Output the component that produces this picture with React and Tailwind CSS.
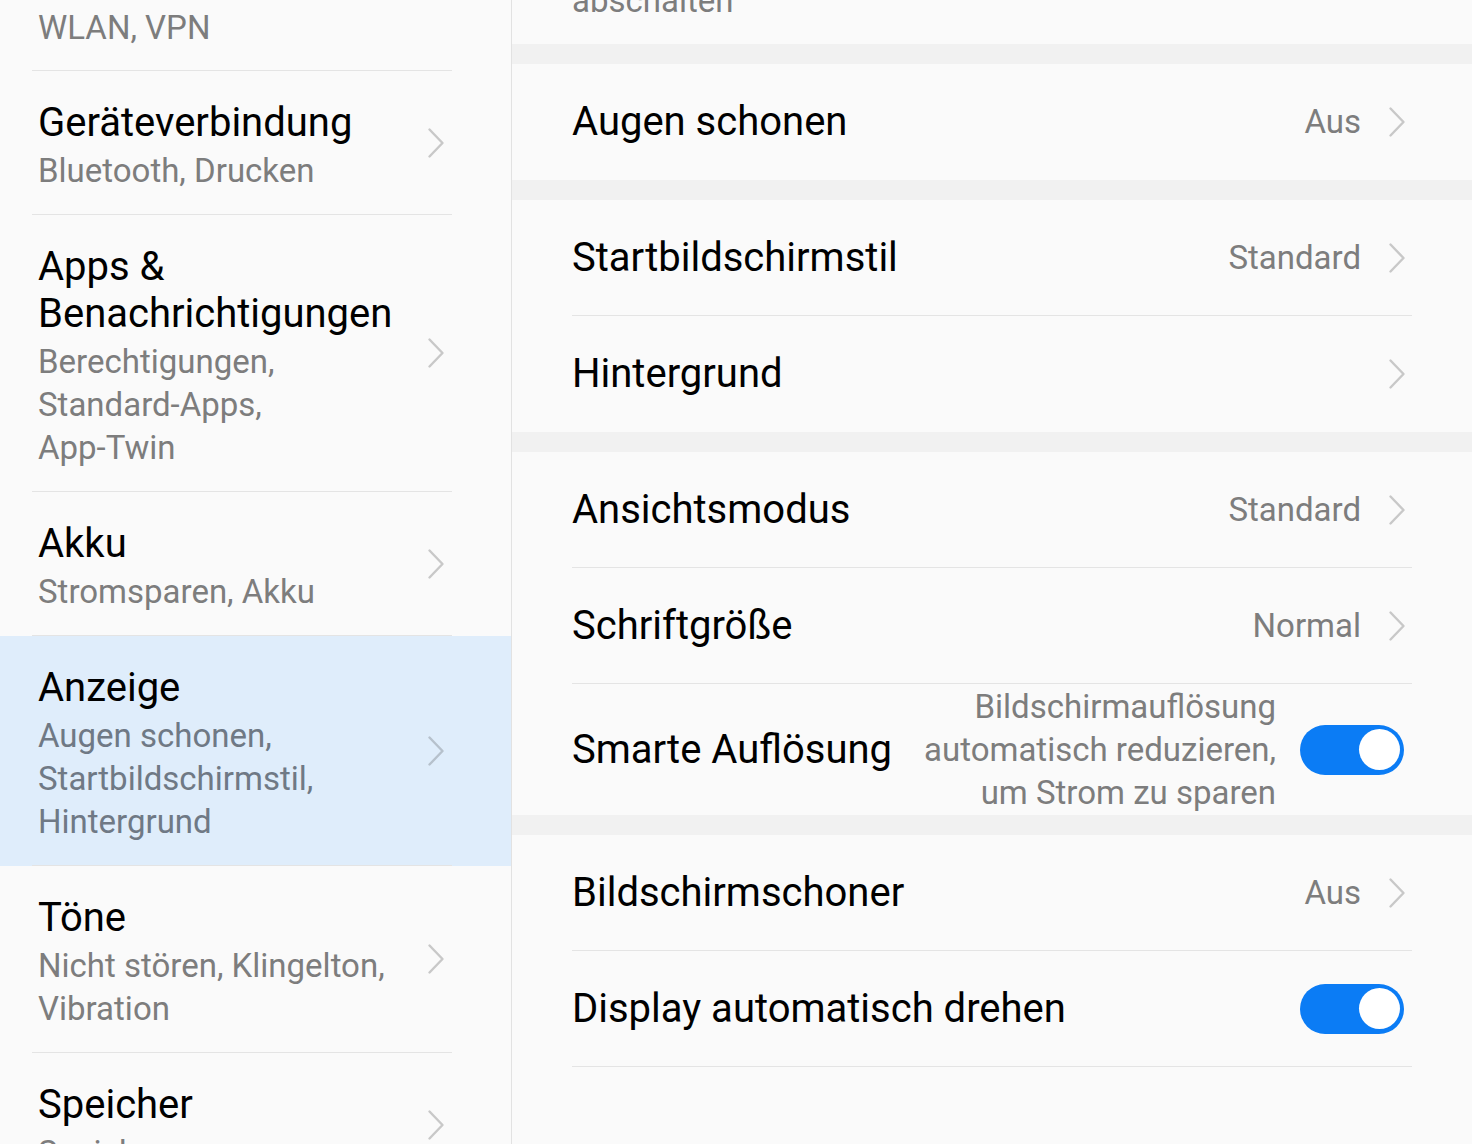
import React from "react";

const font = { fontFamily: "Roboto, 'Noto Sans', sans-serif" };

const Chevron = ({ className = "stroke-[#c8c8c8]" }) => (
    <svg width="18" height="32" viewBox="0 0 18 32" className={className} fill="none">
        <polyline points="2.5,2.5 15.5,16 2.5,29.5" strokeWidth="2.4" strokeLinecap="round" strokeLinejoin="round" />
    </svg>
);

const Toggle = () => (
    <div className="w-[104px] h-[50px] rounded-full bg-[#0b7cf5] flex items-center justify-end pr-[4px]">
        <div className="w-[41px] h-[41px] rounded-full bg-white" />
    </div>
);

const menu = [
    { title: ["Geräteverbindung"], sub: ["Bluetooth, Drucken"] },
    { title: ["Apps &", "Benachrichtigungen"], sub: ["Berechtigungen,", "Standard-Apps,", "App-Twin"] },
    { title: ["Akku"], sub: ["Stromsparen, Akku"] },
    { title: ["Anzeige"], sub: ["Augen schonen,", "Startbildschirmstil,", "Hintergrund"], active: true },
    { title: ["Töne"], sub: ["Nicht stören, Klingelton,", "Vibration"] },
    { title: ["Speicher"], sub: ["Speicher"] },
];

const sections = [
    [{ title: "Augen schonen", value: "Aus" }],
    [{ title: "Startbildschirmstil", value: "Standard" }, { title: "Hintergrund" }],
    [
        { title: "Ansichtsmodus", value: "Standard" },
        { title: "Schriftgröße", value: "Normal" },
        { title: "Smarte Auflösung", smart: true },
    ],
    [{ title: "Bildschirmschoner", value: "Aus" }, { title: "Display automatisch drehen", toggle: true, last: true }],
];

const MenuItem = ({ item }) => (
    <div className={item.active ? "bg-[#dfedfb]" : ""}>
        <div className="ml-[32px] mr-[59px] border-b border-[#e4e4e4]">
            <div className="flex items-center justify-between pt-[28px] pb-[22px] pl-[6px] pr-[7px]">
                <div>
                    {item.title.map((t) => (
                        <div key={t} className="text-[40px] leading-[47px] text-black">{t}</div>
                    ))}
                    <div className="mt-[3px]">
                        {item.sub.map((s) => (
                            <div key={s} className={`text-[33px] leading-[43px] ${item.active ? "text-[#6f7985]" : "text-[#7d7d7d]"}`}>{s}</div>
                        ))}
                    </div>
                </div>
                <div className="mb-[6px]">
                    <Chevron className={item.active ? "stroke-[#b6c1cc]" : "stroke-[#c8c8c8]"} />
                </div>
            </div>
        </div>
    </div>
);

const Row = ({ row, border }) => (
    <div className={`mx-[60px] flex items-center justify-between ${row.smart ? "h-[131px]" : "h-[116px]"} ${border ? "border-b border-[#e4e4e4]" : ""}`}>
        <div className="text-[40px] text-black">{row.title}</div>
        {row.smart ? (
            <div className="flex items-center gap-[24px] pr-[8px]">
                <div className="text-right text-[33px] leading-[43px] text-[#7d7d7d]">
                    <div>Bildschirmauflösung</div>
                    <div>automatisch reduzieren,</div>
                    <div>um Strom zu sparen</div>
                </div>
                <Toggle />
            </div>
        ) : row.toggle ? (
            <div className="pr-[8px]">
                <Toggle />
            </div>
        ) : (
            <div className="flex items-center gap-[27px] pr-[6px]">
                {row.value && <span className="text-[33px] text-[#7d7d7d]">{row.value}</span>}
                <Chevron />
            </div>
        )}
    </div>
);

export default function App() {
    return (
        <div style={font} className="w-[1472px] h-[1144px] overflow-hidden bg-[#fafafa] flex">
            {/* Left menu */}
            <div className="w-[512px] shrink-0 border-r border-[#e2e2e2]">
                <div className="ml-[32px] mr-[59px] h-[71px] border-b border-[#e4e4e4] flex flex-col justify-end pb-[21px] pl-[6px]">
                    <div className="text-[33px] leading-[43px] text-[#7d7d7d]">WLAN, VPN</div>
                </div>
                {menu.map((item) => (
                    <MenuItem key={item.title.join(" ")} item={item} />
                ))}
            </div>

            {/* Right detail */}
            <div className="flex-1">
                <div className="h-[44px] overflow-hidden flex flex-col justify-end pb-[22px] pl-[60px]">
                    <div className="text-[33px] leading-[43px] text-[#7d7d7d]">abschalten</div>
                </div>
                {sections.map((rows, i) => (
                    <div key={i}>
                        <div className="h-[20px] bg-[#f1f1f1]" />
                        {rows.map((row, j) => (
                            <Row key={row.title} row={row} border={j < rows.length - 1 || row.last} />
                        ))}
                    </div>
                ))}
            </div>
        </div>
    );
}
